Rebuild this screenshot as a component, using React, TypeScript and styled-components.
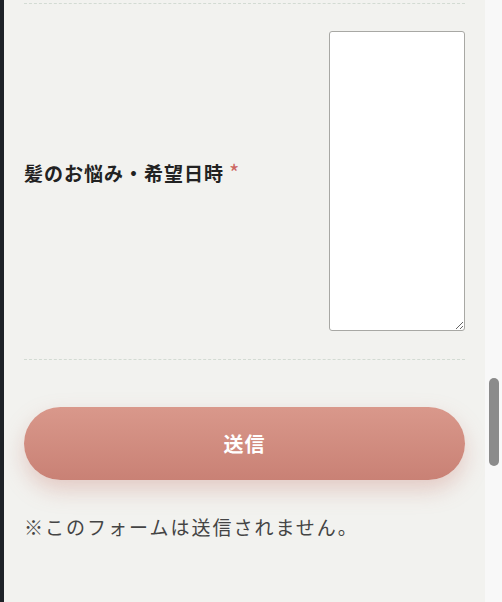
import React from "react";
import styled, { createGlobalStyle } from "styled-components";

const GlobalStyle = createGlobalStyle`
  html, body {
    margin: 0;
    padding: 0;
    height: 100%;
    overflow: hidden;
  }
  body {
    font-family: "Noto Sans CJK JP", "Liberation Serif", serif;
  }
`;

const Frame = styled.div`
  display: flex;
  height: 100vh;
`;

const EdgeStrip = styled.div`
  width: 4px;
  background: #1e2227;
  flex-shrink: 0;
`;

const Main = styled.main`
  flex: 1;
  background: #f2f2ef;
  padding: 3px 20px 0 20px;
  display: flex;
  flex-direction: column;
`;

const FieldRow = styled.div`
  display: flex;
  align-items: center;
  justify-content: space-between;
  border-top: 1px dashed #d3dbd3;
  border-bottom: 1px dashed #d3dbd3;
  padding: 27px 0 28px 0;
`;

const Label = styled.label`
  font-size: 19px;
  font-weight: 700;
  letter-spacing: 1px;
  color: #222222;
  padding-bottom: 20px;
`;

const Required = styled.span`
  color: #cc6660;
  font-size: 22px;
  font-weight: 400;
  margin-left: 5px;
`;

const TextArea = styled.textarea`
  width: 136px;
  height: 300px;
  box-sizing: border-box;
  border: 1px solid #a8a8a4;
  border-radius: 3px;
  background: #ffffff;
  resize: both;
`;

const SubmitButton = styled.button`
  margin-top: 47px;
  height: 73px;
  width: 100%;
  border: none;
  border-radius: 37px;
  background: linear-gradient(180deg, #d9988b 0%, #c98175 100%);
  box-shadow: 0 10px 22px rgba(201, 129, 117, 0.35);
  color: #ffffff;
  font-family: inherit;
  font-size: 20px;
  font-weight: 700;
  letter-spacing: 1px;
  cursor: pointer;
`;

const Note = styled.p`
  margin: 33px 0 0 0;
  font-size: 19px;
  letter-spacing: 2px;
  color: #444444;
`;

const ScrollTrack = styled.div`
  width: 17px;
  flex-shrink: 0;
  background: #f8f8f8;
  display: flex;
  justify-content: center;
`;

const ScrollThumb = styled.div`
  margin-top: 378px;
  width: 10px;
  height: 88px;
  border-radius: 5px;
  background: #8b8b8b;
`;

export default function App() {
  return (
    <>
      <GlobalStyle />
      <Frame>
        <EdgeStrip />
        <Main>
          <FieldRow>
            <Label>
              髪のお悩み・希望日時<Required>*</Required>
            </Label>
            <TextArea />
          </FieldRow>
          <SubmitButton type="button">送信</SubmitButton>
          <Note>※このフォームは送信されません。</Note>
        </Main>
        <ScrollTrack>
          <ScrollThumb />
        </ScrollTrack>
      </Frame>
    </>
  );
}
